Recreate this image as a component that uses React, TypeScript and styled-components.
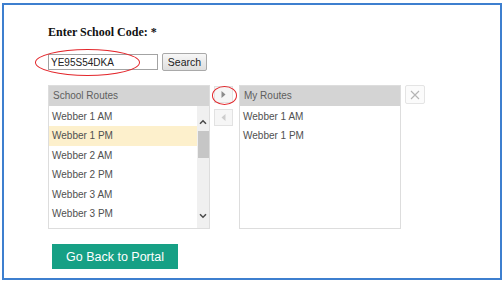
import React from 'react';
import styled, {createGlobalStyle} from "styled-components";

const schoolRoutes = ['Webber 1 AM', 'Webber 1 PM', 'Webber 2 AM', 'Webber 2 PM', 'Webber 3 AM', 'Webber 3 PM'];
const myRoutes = ['Webber 1 AM', 'Webber 1 PM'];

export default function App() {
    return (
        <>
            <Global/>
            <Frame>
                <Title>Enter School Code: *</Title>
                <SearchRow>
                    <CodeWrap>
                        <CodeInput value={'YE95S54DKA'} readOnly/>
                        <Ring $left={-13} $top={-5} $width={105} $height={27}/>
                    </CodeWrap>
                    <SearchButton>Search</SearchButton>
                </SearchRow>
                <Picker>
                    <Panel>
                        <PanelHeader>School Routes</PanelHeader>
                        <PanelBody>
                            <List>
                                {schoolRoutes.map((r, i) => (
                                    <Row key={r} $selected={i === 1}>{r}</Row>
                                ))}
                            </List>
                            <ScrollTrack>
                                <Chevron viewBox={'0 0 8 5'}>
                                    <path d={'M1 4.2 L4 1.2 L7 4.2'}/>
                                </Chevron>
                                <Thumb/>
                                <TrackSpace/>
                                <Chevron viewBox={'0 0 8 5'}>
                                    <path d={'M1 0.8 L4 3.8 L7 0.8'}/>
                                </Chevron>
                            </ScrollTrack>
                        </PanelBody>
                    </Panel>
                    <MoveColumn>
                        <MoveButton>
                            <Arrow viewBox={'0 0 5 7'}><path d={'M0.5 0 L4.5 3.5 L0.5 7 Z'}/></Arrow>
                            <Ring $left={-3} $top={-1} $width={25} $height={19}/>
                        </MoveButton>
                        <MoveButton $disabled>
                            <Arrow viewBox={'0 0 5 7'}><path d={'M4.5 0 L0.5 3.5 L4.5 7 Z'}/></Arrow>
                        </MoveButton>
                    </MoveColumn>
                    <Panel>
                        <PanelHeader>My Routes</PanelHeader>
                        <PanelBody>
                            <List>
                                {myRoutes.map(r => <Row key={r}>{r}</Row>)}
                            </List>
                        </PanelBody>
                    </Panel>
                    <ClearButton>
                        <svg width={10} height={10} viewBox={'0 0 10 10'}>
                            <path d={'M1 1 L9 9 M9 1 L1 9'} stroke={'#b4b4b4'} strokeWidth={1.1}/>
                        </svg>
                    </ClearButton>
                </Picker>
                <PortalButton>Go Back to Portal</PortalButton>
            </Frame>
        </>
    );
}

const Global = createGlobalStyle`
  html, body {
    margin: 0;
    background: #fff;
  }
  * {
    box-sizing: border-box;
  }
`

const Frame = styled.div`
  margin: 3px 0 0 2px;
  width: 500px;
  height: 277px;
  border: 2px solid #3d7fcf;
  padding: 20px 0 0 44px;
  font-family: "Liberation Sans", Arial, sans-serif;
`

const Title = styled.div`
  font-family: "Liberation Serif", "Times New Roman", serif;
  font-weight: bold;
  font-size: 12px;
  line-height: 14px;
  color: #111;
`

const SearchRow = styled.div`
  display: flex;
  align-items: center;
  gap: 4px;
  margin-top: 14px;
`

const CodeWrap = styled.div`
  position: relative;
`

const CodeInput = styled.input`
  display: block;
  width: 110px;
  height: 16px;
  border: 1px solid #a3a3a3;
  padding: 0 2px;
  font-family: inherit;
  font-size: 10px;
  color: #222;
  outline: none;
`

const Ring = styled.span<{ $left: number; $top: number; $width: number; $height: number }>`
  position: absolute;
  left: ${p => p.$left}px;
  top: ${p => p.$top}px;
  width: ${p => p.$width}px;
  height: ${p => p.$height}px;
  border: 1.5px solid #e3262b;
  border-radius: 50%;
  pointer-events: none;
`

const SearchButton = styled.button`
  width: 45px;
  height: 18px;
  padding: 0;
  border: 1px solid #a9a9a9;
  border-radius: 2px;
  background: linear-gradient(#f7f7f7, #dedede);
  font-family: inherit;
  font-size: 10.5px;
  color: #222;
`

const Picker = styled.div`
  display: flex;
  align-items: flex-start;
  margin-top: 14px;
`

const Panel = styled.div`
  width: 162px;
  height: 144px;
  border: 1px solid #dddddd;
  display: flex;
  flex-direction: column;
  background: #fff;
`

const PanelHeader = styled.div`
  height: 20px;
  background: #d4d4d4;
  color: #5e5e5e;
  font-size: 10px;
  line-height: 20px;
  padding-left: 4px;
`

const PanelBody = styled.div`
  flex: 1;
  display: flex;
  overflow: hidden;
`

const List = styled.div`
  flex: 1;
  padding-top: 1px;
`

const Row = styled.div<{ $selected?: boolean }>`
  height: 19.4px;
  line-height: 19.4px;
  padding-left: 3px;
  font-size: 10px;
  color: #505050;
  background: ${p => p.$selected ? '#fdf0cc' : 'transparent'};
`

const ScrollTrack = styled.div`
  width: 12px;
  background: #f0f0f0;
  display: flex;
  flex-direction: column;
  align-items: center;
  padding: 13px 0 9px 0;
`

const Chevron = styled.svg`
  width: 8px;
  height: 6px;
  fill: none;
  stroke: #4a4a4a;
  stroke-width: 1.5;
`

const Thumb = styled.div`
  width: 11px;
  height: 27px;
  margin: 6px 0 0 0;
  background: #c6c6c6;
`

const TrackSpace = styled.div`
  flex: 1;
`

const MoveColumn = styled.div`
  display: flex;
  flex-direction: column;
  gap: 6px;
  margin: 1px 6px 0 4px;
`

const MoveButton = styled.div<{ $disabled?: boolean }>`
  position: relative;
  width: 19px;
  height: 17px;
  border: 1px solid #e2e2e2;
  background: #f6f6f6;
  display: flex;
  align-items: center;
  justify-content: center;
  fill: ${p => p.$disabled ? '#cdcdcd' : '#8c8c8c'};
`

const Arrow = styled.svg`
  width: 5px;
  height: 7px;
`

const ClearButton = styled.div`
  width: 20px;
  height: 19px;
  margin-left: 4px;
  border: 1px solid #e4e4e4;
  border-radius: 2px;
  background: #fbfbfb;
  display: flex;
  align-items: center;
  justify-content: center;
`

const PortalButton = styled.button`
  display: block;
  margin: 15px 0 0 4px;
  width: 126px;
  height: 25px;
  border: none;
  background: #16a085;
  color: #fff;
  font-family: inherit;
  font-size: 12.5px;
  padding: 0;
`
